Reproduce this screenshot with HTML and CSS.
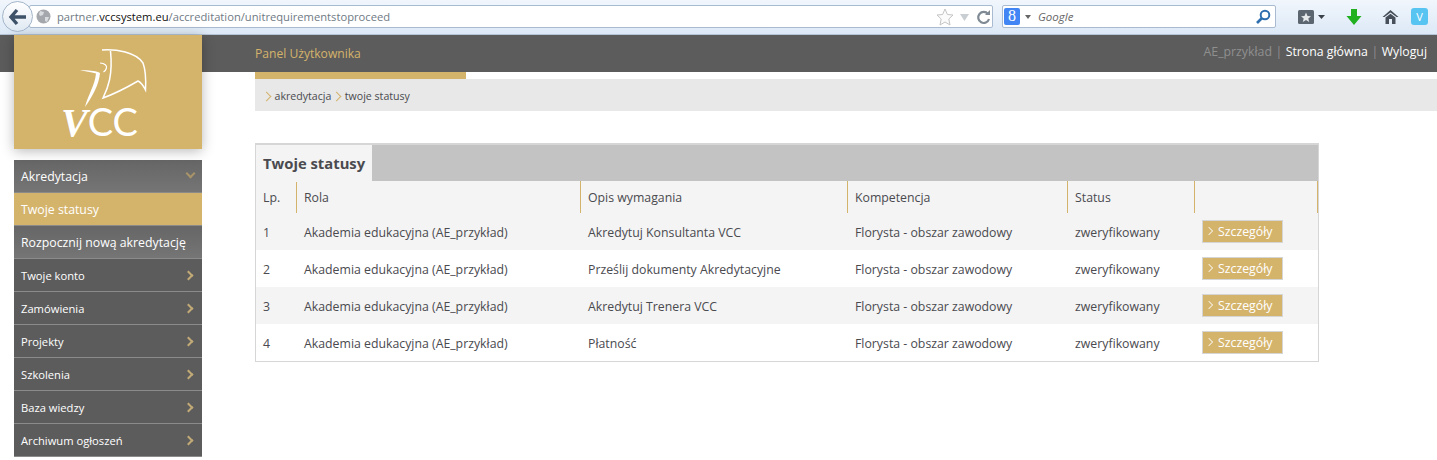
FILE: index.html
```html
<!DOCTYPE html>
<html lang="pl">
<head>
    <meta charset="UTF-8">
    <title>Twoje statusy - VCC</title>
    <link rel="stylesheet" href="styles.css">
</head>
<body>
    <!-- pasek przegladarki -->
    <div class="browser-bar">
        <button class="back-btn">
            <svg width="20" height="18" viewBox="0 0 20 18"><path d="M9 2 L3 9 L9 16 M3.500 9 H18" fill="none" stroke="#3d5168" stroke-width="3.400"/></svg>
        </button>
        <div class="url-box">
            <svg class="globe" width="15" height="15" viewBox="0 0 15 15"><circle cx="7.500" cy="7.500" r="7" fill="#a4a8ac"/><path d="M4 2 L8 3 L7 6 L4 7 L3 5 Z M9 8 L13 8 L11 13 L9 12 Z" fill="#d9dcdf"/></svg>
            <span class="url-text">partner.<b>vccsystem.eu</b>/accreditation/unitrequirementstoproceed</span>
            <svg class="url-icons" width="56" height="18" viewBox="0 0 56 18"><path d="M9 1 L11.400 6.500 L17 7 L12.800 11 L14 17 L9 14 L4 17 L5.200 11 L1 7 L6.600 6.500 Z" fill="#fbfbfb" stroke="#c4c4c4"/><path d="M24 6 H33 L28.500 13 Z" fill="#c9ced3"/><path d="M52 6 A5.500 5.500 0 1 0 53 11" fill="none" stroke="#7f8a94" stroke-width="2.200"/><path d="M49 7 H54 V2 Z" fill="#7f8a94"/></svg>
        </div>
        <div class="search-box">
            <span class="g-icon">8</span>
            <span class="g-caret"></span>
            <span class="search-text">Google</span>
            <svg width="16" height="16" viewBox="0 0 16 16"><circle cx="10" cy="6" r="4.300" fill="none" stroke="#2f6fb0" stroke-width="2"/><path d="M7 9 L2 14" stroke="#2f6fb0" stroke-width="2.600"/></svg>
        </div>
        <div class="tool-icons">
            <svg width="32" height="16" viewBox="0 0 32 16"><rect x="0" y="1" width="16" height="14" rx="1.500" fill="#5c6670"/><path d="M8 3.500 L9.500 7 L13 7.300 L10.300 9.500 L11.200 13 L8 11 L4.800 13 L5.700 9.500 L3 7.300 L6.500 7 Z" fill="#e6e9ec"/><path d="M20 6 H27 L23.500 10 Z" fill="#3b4148"/></svg>
            <svg class="arrow-icon" width="16" height="18" viewBox="0 0 16 18"><path d="M5 1 H11 V8 H15.500 L8 17 L0.500 8 H5 Z" fill="#20b020"/></svg>
            <svg class="home-icon" width="17" height="16" viewBox="0 0 17 16"><path d="M8.500 1 L16.500 8 L14.500 8 L8.500 3.500 L2.500 8 L0.500 8 Z" fill="#47505a"/><path d="M3.500 8.500 L8.500 4.800 L13.500 8.500 V15 H10 V10 H7 V15 H3.500 Z" fill="#47505a"/></svg>
            <span class="v-icon">V</span>
        </div>
    </div>

    <!-- naglowek -->
    <header class="top-bar">
        <span class="panel-title">Panel Użytkownika</span>
        <nav class="top-links">
            <span class="user-name">AE_przykład</span>
            <span class="sep">|</span>
            <a href="#">Strona główna</a>
            <span class="sep">|</span>
            <a href="#">Wyloguj</a>
        </nav>
    </header>

    <!-- logo -->
    <div class="logo">
        <svg width="188" height="114" viewBox="0 0 188 114">
            <path d="M88 15 C102 14 122 17 129 28 C132 36 132 46 131.500 55 C129 50 126 47 124 46 C112 53 100 59 89 63 C94 53 99 40 96.500 16" fill="none" stroke="#fff" stroke-width="1.500"/>
            <path d="M66 35.500 C74 35 82 36 86 38 C85 50 78 62 71 72 C74 60 81 50 82 38.500 C77 37 71 36 66 35.500 Z" fill="#fff"/>
            <path d="M86 28 C91 28 93 31 92.500 33 C92 35 91 36 89.500 37" fill="none" stroke="#fff" stroke-width="1.200"/>
            <text class="logo-text" x="47" y="101"><tspan class="logo-v">V</tspan>CC</text>
        </svg>
    </div>

    <div class="page">
        <!-- menu boczne -->
        <aside class="sidebar">
            <a href="#" class="side-link side-open">Akredytacja <span class="chev chev-down"></span></a>
            <a href="#" class="side-link side-active">Twoje statusy</a>
            <a href="#" class="side-link side-sub">Rozpocznij nową akredytację</a>
            <a href="#" class="side-link">Twoje konto <span class="chev"></span></a>
            <a href="#" class="side-link">Zamówienia <span class="chev"></span></a>
            <a href="#" class="side-link">Projekty <span class="chev"></span></a>
            <a href="#" class="side-link">Szkolenia <span class="chev"></span></a>
            <a href="#" class="side-link">Baza wiedzy <span class="chev"></span></a>
            <a href="#" class="side-link">Archiwum ogłoszeń <span class="chev"></span></a>
        </aside>

        <main class="main-content">
            <div class="crumb-tab"></div>
            <div class="crumbs">
                <span class="crumb-arrow"></span><a href="#">akredytacja</a>
                <span class="crumb-arrow"></span><a href="#">twoje statusy</a>
            </div>

            <section class="panel">
                <div class="panel-head"><h2>Twoje statusy</h2></div>
                <table class="status-table">
                    <colgroup>
                        <col class="col-lp"><col class="col-role"><col class="col-req"><col class="col-comp"><col class="col-status"><col class="col-btn">
                    </colgroup>
                    <thead>
                        <tr><th>Lp.</th><th>Rola</th><th>Opis wymagania</th><th>Kompetencja</th><th>Status</th><th></th></tr>
                    </thead>
                    <tbody>
                        <tr><td>1</td><td>Akademia edukacyjna (AE_przykład)</td><td>Akredytuj Konsultanta VCC</td><td>Florysta - obszar zawodowy</td><td>zweryfikowany</td><td><a href="#" class="details-btn">Szczegóły</a></td></tr>
                        <tr><td>2</td><td>Akademia edukacyjna (AE_przykład)</td><td>Prześlij dokumenty Akredytacyjne</td><td>Florysta - obszar zawodowy</td><td>zweryfikowany</td><td><a href="#" class="details-btn">Szczegóły</a></td></tr>
                        <tr><td>3</td><td>Akademia edukacyjna (AE_przykład)</td><td>Akredytuj Trenera VCC</td><td>Florysta - obszar zawodowy</td><td>zweryfikowany</td><td><a href="#" class="details-btn">Szczegóły</a></td></tr>
                        <tr><td>4</td><td>Akademia edukacyjna (AE_przykład)</td><td>Płatność</td><td>Florysta - obszar zawodowy</td><td>zweryfikowany</td><td><a href="#" class="details-btn">Szczegóły</a></td></tr>
                    </tbody>
                </table>
            </section>
        </main>
    </div>
</body>
</html>
```

FILE: styles.css
```css
:root {
    --gold: #d4b36b;
    --dark: #5c5c5c;
    --text: #4a4a4f;
}
html, body {
    height: 460px;
    overflow: hidden;
}
body {
    margin: 0;
    position: relative;
    font-family: "Open Sans", sans-serif;
    font-size: 12.300px;
    color: var(--text);
    background: #fff;
}
a {
    color: inherit;
    text-decoration: none;
}
/* pasek przegladarki */
.browser-bar {
    height: 35px;
    box-sizing: border-box;
    display: flex;
    align-items: center;
    padding: 0 8px 1px 2px;
    background: linear-gradient(#f1f6fc, #dde9f7);
    border-bottom: 1px solid #b5c4d6;
}
.back-btn {
    width: 31px;
    height: 31px;
    padding: 0;
    border-radius: 50%;
    border: 1px solid #a3b5c9;
    background: linear-gradient(#fff, #dfe8f2);
    display: grid;
    place-items: center;
    position: relative;
    z-index: 1;
    flex: none;
}
.url-box, .search-box {
    height: 23px;
    box-sizing: border-box;
    background: #fff;
    border: 1px solid #a9bbd0;
    border-radius: 2px;
    display: flex;
    align-items: center;
}
.url-box {
    width: 964px;
    margin-left: -4px;
    padding: 0 0 0 6px;
}
.globe {
    flex: none;
    margin-right: 6px;
}
.url-text {
    flex: 1;
    font-size: 11.200px;
    color: #6f7a84;
    white-space: nowrap;
}
.url-text b {
    font-weight: 400;
    color: #111;
}
.search-box {
    width: 274px;
    margin-left: 9px;
    padding: 0 4px 0 1px;
}
.g-icon {
    width: 16px;
    height: 17px;
    border-radius: 2px;
    background: #4285f4;
    color: #fff;
    font-family: "Liberation Serif", serif;
    font-size: 16px;
    line-height: 16px;
    text-align: center;
}
.g-caret {
    margin: 0 7px 0 5px;
    border: 3px solid transparent;
    border-top: 4px solid #666;
    border-bottom: 0;
}
.search-text {
    flex: 1;
    font-style: italic;
    font-size: 11.500px;
    color: #666;
}
.tool-icons {
    display: flex;
    align-items: center;
    margin-left: 22px;
    gap: 14px;
}
.arrow-icon {
    margin-left: 2px;
}
.home-icon {
    margin-left: 6px;
}
.v-icon {
    width: 17px;
    height: 17px;
    margin-left: -2px;
    border-radius: 3px;
    background: #57c4f2;
    color: #fff;
    font-size: 11px;
    font-weight: 400;
    line-height: 17px;
    text-align: center;
}
/* naglowek */
.top-bar {
    height: 37px;
    display: flex;
    justify-content: space-between;
    align-items: center;
    padding: 0 10px 0 255px;
    background: var(--dark);
}
.panel-title {
    color: var(--gold);
    font-size: 12.100px;
}
.top-links {
    display: flex;
    gap: 3.500px;
    padding-bottom: 4px;
    color: #fff;
}
.user-name, .sep {
    color: #8f8f8f;
}
/* logo nachodzi na naglowek */
.logo {
    position: absolute;
    left: 14px;
    top: 35px;
    width: 188px;
    height: 114px;
    background: var(--gold);
    box-shadow: 0 2px 12px rgba(0, 0, 0, 0.28);
}
.logo svg {
    display: block;
}
.logo-text {
    font-family: "Lato", sans-serif;
    font-weight: 400;
    font-size: 38px;
    fill: #fff;
}
.logo-v {
    font-family: "Liberation Serif", serif;
    font-style: italic;
    font-weight: 700;
    font-size: 40px;
}
.page {
    display: flex;
    align-items: flex-start;
}
/* menu boczne */
.sidebar {
    width: 188px;
    margin: 88px 0 0 14px;
    flex: none;
}
.side-link {
    height: 33px;
    box-sizing: border-box;
    display: flex;
    justify-content: space-between;
    align-items: center;
    padding: 0 7px;
    background: var(--dark);
    border-bottom: 1px solid #8b8b8b;
    color: #fff;
    font-size: 11.200px;
    font-weight: 500;
    white-space: nowrap;
}
.side-open, .side-sub {
    background: linear-gradient(#666, #757575);
    font-size: 12.300px;
    font-weight: 400;
}
.side-active {
    background: var(--gold);
    font-size: 12.300px;
    font-weight: 400;
}
.chev {
    width: 5px;
    height: 5px;
    border-top: 2px solid #c2aa76;
    border-right: 2px solid #c2aa76;
    transform: rotate(45deg);
    margin-right: 3px;
}
.chev-down {
    border-color: #a89468;
    transform: rotate(135deg);
    margin: -6px 1px 0 0;
}
/* zawartosc */
.main-content {
    margin-left: 53px;
    flex: 1;
}
.crumb-tab {
    width: 211px;
    height: 7px;
    background: var(--gold);
}
.crumbs {
    height: 32px;
    box-sizing: border-box;
    display: flex;
    align-items: center;
    padding: 2px 0 0 8px;
    background: #e8e8e8;
    font-size: 10.600px;
}
.crumb-arrow {
    width: 6px;
    height: 6px;
    border-top: 1.500px solid var(--gold);
    border-right: 1.500px solid var(--gold);
    transform: rotate(45deg);
    margin: 0 4.500px 0 0;
}
.crumbs a {
    margin-right: 2px;
}
.panel {
    width: 1064px;
    box-sizing: border-box;
    margin-top: 32px;
    border: 1px solid #d6d6d6;
    border-top-width: 2px;
}
.panel-head {
    height: 36px;
    background: #c3c3c3;
}
.panel-head h2 {
    display: inline-block;
    box-sizing: border-box;
    height: 37px;
    margin: 0;
    padding: 0 7px;
    background: #f4f4f4;
    font-size: 14.800px;
    font-weight: 700;
    line-height: 37px;
}
.status-table {
    width: 100%;
    border-collapse: collapse;
    table-layout: fixed;
}
.col-lp { width: 40px; }
.col-role { width: 284px; }
.col-req { width: 267px; }
.col-comp { width: 220px; }
.col-status { width: 127px; }
.status-table th {
    height: 32px;
    padding: 0 7px 0 7.500px;
    background: #f4f4f4;
    border-right: 1px solid var(--gold);
    font-weight: 400;
    text-align: left;
}
.status-table th:first-child, .status-table td:first-child {
    padding-left: 7px;
}
.status-table td {
    box-sizing: border-box;
    height: 37px;
    padding: 2px 7px 0 8px;
}
.status-table td:last-child {
    padding-top: 0;
}
.status-table tbody tr:nth-child(odd) {
    background: #f4f4f4;
}
.details-btn {
    display: block;
    box-sizing: border-box;
    width: 81px;
    height: 23px;
    padding-left: 15px;
    position: relative;
    background: var(--gold);
    border: 1px solid #d5d5d5;
    color: #fff;
    line-height: 21px;
}
.details-btn::before {
    content: "";
    position: absolute;
    left: 3px;
    top: 7px;
    width: 5px;
    height: 5px;
    border-top: 1px solid rgba(255, 255, 255, 0.75);
    border-right: 1px solid rgba(255, 255, 255, 0.75);
    transform: rotate(45deg);
}
```
